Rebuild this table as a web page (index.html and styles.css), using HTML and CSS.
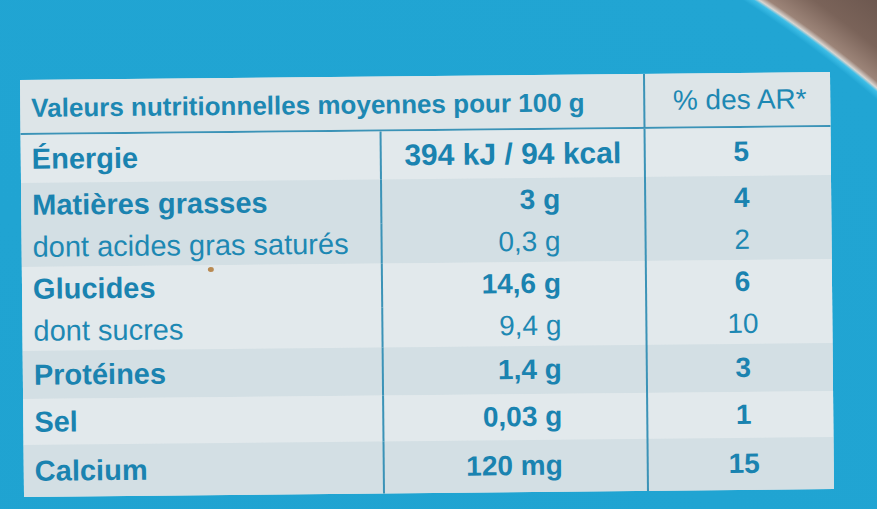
FILE: index.html
```html
<!DOCTYPE html>
<html lang="fr">
<head>
<meta charset="utf-8">
<title>Valeurs nutritionnelles</title>
<link rel="stylesheet" href="styles.css">
</head>
<body>
<div class="lid">
  <div class="label">
    <div class="head">
      <div class="h-title">Valeurs nutritionnelles moyennes pour 100 g</div>
      <div class="h-ar">% des AR*</div>
    </div>

    <div class="row light tall">
      <div class="name b">Énergie</div>
      <div class="val b wide">394 kJ / 94 kcal</div>
      <div class="pct b">5</div>
    </div>

    <div class="grp dark">
      <div class="row main">
        <div class="name b">Matières grasses</div>
        <div class="val b">3 g</div>
        <div class="pct b">4</div>
      </div>
      <div class="row sub">
        <div class="name">dont acides gras saturés</div>
        <div class="val">0,3 g</div>
        <div class="pct">2</div>
      </div>
    </div>

    <div class="grp light">
      <div class="row main">
        <div class="name b">Glucides<span class="speck"></span></div>
        <div class="val b">14,6 g</div>
        <div class="pct b">6</div>
      </div>
      <div class="row sub">
        <div class="name">dont sucres</div>
        <div class="val">9,4 g</div>
        <div class="pct">10</div>
      </div>
    </div>

    <div class="row dark tall">
      <div class="name b">Protéines</div>
      <div class="val b">1,4 g</div>
      <div class="pct b">3</div>
    </div>

    <div class="row light mid">
      <div class="name b">Sel</div>
      <div class="val b">0,03 g</div>
      <div class="pct b">1</div>
    </div>

    <div class="row dark last">
      <div class="name b">Calcium</div>
      <div class="val b">120 mg</div>
      <div class="pct b">15</div>
    </div>
  </div>
</div>
</body>
</html>
```

FILE: styles.css
```css
html, body {
  margin: 0;
  padding: 0;
}

body {
  width: 877px;
  height: 509px;
  overflow: hidden;
  background:
    radial-gradient(circle at 102px 1003px,
      #1ea2d0 0,
      #21a5d3 1190px,
      #3dbde6 1196px,
      #d9d4cf 1199px,
      #9c8478 1204px,
      #7a6359 1230px,
      #5a4842 1320px);
  font-family: "Liberation Sans", Arial, sans-serif;
  color: #1d88b3;
}

.lid {
  padding: 76px 0 0 22px;
}

.label {
  width: 810px;
  background: #dfe7ea;
  transform: rotate(-0.55deg);
  transform-origin: 50% 50%;
}

.head {
  display: grid;
  grid-template-columns: 625px 185px;
  height: 55px;
  border-bottom: 2px solid #3b93b7;
  box-sizing: border-box;
  background: #dde5e8;
}

.h-title {
  border-right: 2px solid #3b93b7;
  padding-left: 11px;
  font-size: 26px;
  font-weight: 700;
  display: flex;
  align-items: center;
  padding-top: 3px;
}

.h-ar {
  display: flex;
  align-items: center;
  justify-content: center;
  font-size: 28px;
  padding-top: 1px;
  padding-left: 4px;
}

.row {
  display: grid;
  grid-template-columns: 361px 264px 185px;
}

.light {
  background: #e2e9ec;
}

.dark {
  background: #d3dfe4;
}

.tall { height: 48px; }
.main { height: 44px; }
.sub  { height: 40px; }
.mid  { height: 46px; }
.last { height: 52px; }

.name, .val, .pct {
  display: flex;
  align-items: center;
  font-size: 28px;
  box-sizing: border-box;
}

.name {
  border-right: 2px solid #3b93b7;
  padding-left: 11px;
  position: relative;
  font-size: 29px;
}

.val {
  border-right: 2px solid #3b93b7;
  justify-content: flex-end;
  padding-right: 84px;
}

.val.wide {
  justify-content: center;
  padding-right: 0;
  font-size: 30px;
}

.pct {
  justify-content: center;
  padding-left: 6px;
}

.b {
  font-weight: 700;
  color: #1a83b0;
}

.speck {
  position: absolute;
  left: 186px;
  top: 2px;
  width: 6px;
  height: 5px;
  border-radius: 50%;
  background: #b98a52;
}
```
